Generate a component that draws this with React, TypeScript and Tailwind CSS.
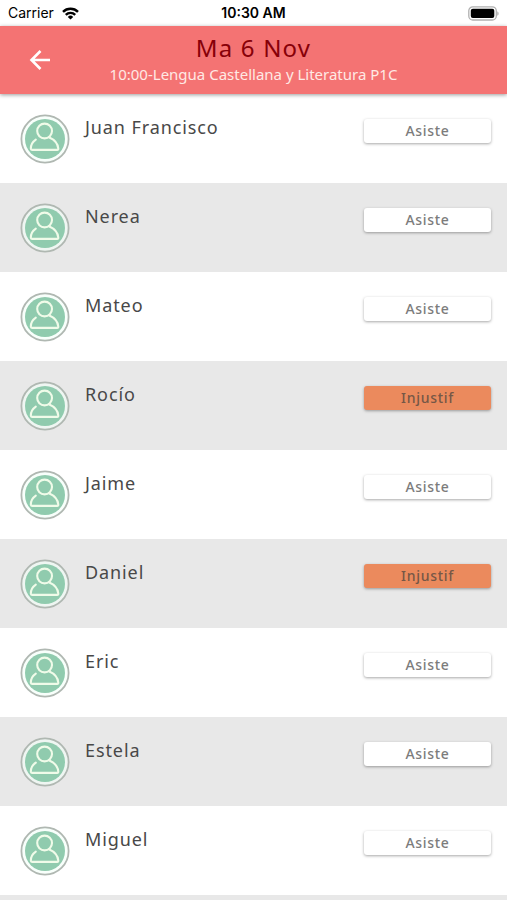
type Status = 'Asiste' | 'Injustif';

const students: { name: string; status: Status }[] = [
  { name: 'Juan Francisco', status: 'Asiste' },
  { name: 'Nerea', status: 'Asiste' },
  { name: 'Mateo', status: 'Asiste' },
  { name: 'Rocío', status: 'Injustif' },
  { name: 'Jaime', status: 'Asiste' },
  { name: 'Daniel', status: 'Injustif' },
  { name: 'Eric', status: 'Asiste' },
  { name: 'Estela', status: 'Asiste' },
  { name: 'Miguel', status: 'Asiste' },
];

function StatusBar() {
  return (
    <div className="grid h-[26px] grid-cols-3 items-center bg-white px-2 font-['Inter',sans-serif] text-sm text-black">
      <div className="flex items-center gap-2">
        <span>Carrier</span>
        <svg width="17" height="13" viewBox="0 0 17 13" fill="none" stroke="currentColor" strokeWidth="2.4" aria-hidden="true">
          <path d="M1 4.9a10.6 10.6 0 0 1 15 0" />
          <path d="M3.8 7.8a6.6 6.6 0 0 1 9.4 0" />
          <path d="M8.5 12.6 5.8 9.9a3.8 3.8 0 0 1 5.4 0z" fill="currentColor" stroke="none" />
        </svg>
      </div>
      <span className="text-center font-semibold">10:30 AM</span>
      <svg className="justify-self-end" width="32" height="15" viewBox="0 0 32 15" aria-hidden="true">
        <rect x="1.8" y="0.8" width="27.5" height="13.2" rx="4" fill="white" stroke="#b0b0b0" strokeWidth="1.3" />
        <rect x="3.8" y="2.8" width="23.5" height="9.2" rx="2" />
        <path d="M30.4 5.2c1.5.8 1.5 3.8 0 4.6z" fill="#a0a0a0" />
      </svg>
    </div>
  );
}

function Avatar() {
  return (
    <svg className="shrink-0" width="50" height="50" viewBox="0 0 50 50" fill="none" aria-hidden="true">
      <circle cx="25" cy="25" r="23.6" fill="#f4fff8" fillOpacity="0.6" stroke="#b0b8b2" strokeWidth="1.8" />
      <circle cx="25" cy="25" r="20" fill="#90cbae" />
      <g stroke="#f0fbe9" strokeWidth="2.1" strokeLinecap="round" strokeLinejoin="round">
        <circle cx="24.6" cy="17" r="7.4" />
        <path d="M15.8 25.6c-3.2 2.2-5 5.6-5 9 0 .9.4 1.3 1.2 1.3h25.2c.8 0 1.2-.4 1.1-1.3-.5-5.4-3.6-8.8-9-11.1" />
      </g>
    </svg>
  );
}

export default function App() {
  return (
    <div className="flex min-h-screen flex-col bg-white font-['Noto_Sans','Open_Sans',sans-serif]">
      <StatusBar />
      <header className="relative flex h-[68px] items-center bg-[#f47373] shadow-[0_1px_4px_rgba(0,0,0,0.4)]">
        <button type="button" aria-label="Volver" className="ml-7 flex size-6 items-center justify-center text-white">
          <svg width="22" height="22" viewBox="0 0 22 22" fill="none" stroke="currentColor" strokeWidth="2.6" aria-hidden="true">
            <path d="M21 11H3M11.5 2 2.5 11l9 9" />
          </svg>
        </button>
        <div className="flex-1 pr-[52px] text-center">
          <h1 className="text-2xl leading-7 tracking-wider text-[#870008]">Ma 6 Nov</h1>
          <p className="text-[15px] leading-6 text-[#ffe9e4]">10:00-Lengua Castellana y Literatura P1C</p>
        </div>
      </header>
      <ul>
        {students.map(({ name, status }) => (
          <li key={name} className="flex h-[89px] items-start pr-4 pl-5 even:bg-[#e8e8e8]">
            <div className="pt-5">
              <Avatar />
            </div>
            <span className="flex-1 pt-[21px] pl-[15px] text-lg leading-6 tracking-wider text-[#484848]">{name}</span>
            <button
              type="button"
              className={`mt-[25px] h-6 w-[127px] rounded-[3px] text-sm leading-6 font-medium tracking-wider shadow-[0_1px_3px_rgba(0,0,0,0.35)] ${
                status === 'Injustif' ? 'bg-[#eb8a5d] text-[#765746]' : 'bg-white text-[#7c7c7c]'
              }`}
            >
              {status}
            </button>
          </li>
        ))}
      </ul>
      <div className="flex-1 bg-[#e8e8e8]" />
    </div>
  );
}
